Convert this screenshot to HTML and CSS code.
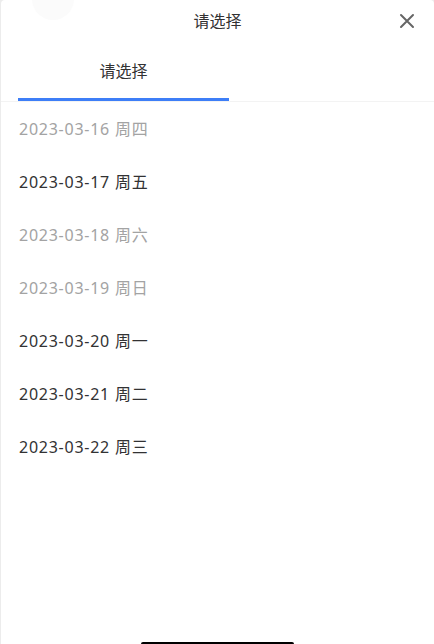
FILE: index.html
```html
<!doctype html>
<html lang="zh-CN">
<head>
    <meta charset="utf-8"/>
    <title>请选择</title>
    <link rel="stylesheet" href="styles.css">
</head>
<body>
<div class="sheet">
    <div class="blob"></div>
    <div class="sheet-head">
        <span class="sheet-title">请选择</span>
        <span class="sheet-close">
            <svg width="16" height="16" viewBox="0 0 16 16">
                <path d="M2 2L14 14M14 2L2 14" stroke="#666" stroke-width="2" stroke-linecap="round"/>
            </svg>
        </span>
    </div>
    <div class="tabs">
        <div class="tab active">请选择</div>
    </div>
    <ul class="options">
        <li class="disabled">2023-03-16 周四</li>
        <li>2023-03-17 周五</li>
        <li class="disabled">2023-03-18 周六</li>
        <li class="disabled">2023-03-19 周日</li>
        <li>2023-03-20 周一</li>
        <li>2023-03-21 周二</li>
        <li>2023-03-22 周三</li>
    </ul>
    <div class="home-bar"></div>
</div>
</body>
</html>
```

FILE: styles.css
```css
html, body, ul, li {
    margin: 0;
    padding: 0;
    list-style: none;
}

body {
    background: #ececec;
    font-family: "Noto Sans", "Noto Sans CJK SC", sans-serif;
    color: #323233;
    height: 644px;
    overflow: hidden;
}

.sheet {
    position: relative;
    margin-left: 1px;
    height: 644px;
    background: #fff;
    border-radius: 4px 4px 0 0;
    display: flex;
    flex-direction: column;
}

.blob {
    position: absolute;
    left: 31px;
    top: -22px;
    width: 42px;
    height: 42px;
    border-radius: 50%;
    background: #fbfbfb;
}

.sheet-head {
    position: relative;
    height: 40px;
    display: flex;
    align-items: center;
    justify-content: center;
}

.sheet-title {
    font-size: 16px;
    color: #323233;
}

.sheet-close {
    position: absolute;
    right: 19px;
    top: 12px;
    width: 16px;
    height: 16px;
}

.tabs {
    display: flex;
    padding: 0 0 0 17px;
    border-bottom: 1px solid #f3f3f3;
}

.tab {
    width: 211px;
    height: 57px;
    display: flex;
    align-items: center;
    justify-content: center;
    font-size: 16px;
    color: #323233;
    border-bottom: 3px solid transparent;
    padding-top: 1px;
}

.tab.active {
    border-bottom-color: #3d7ef7;
}

.options li {
    height: 51px;
    padding: 0 0 2px 18px;
    display: flex;
    align-items: center;
    font-size: 16px;
    letter-spacing: 0.75px;
    color: #323233;
}

.options li.disabled {
    color: #a3a3a3;
}

.home-bar {
    position: absolute;
    left: 140px;
    bottom: 0;
    width: 153px;
    height: 2px;
    background: #000;
    border-radius: 2px 2px 0 0;
}
```
